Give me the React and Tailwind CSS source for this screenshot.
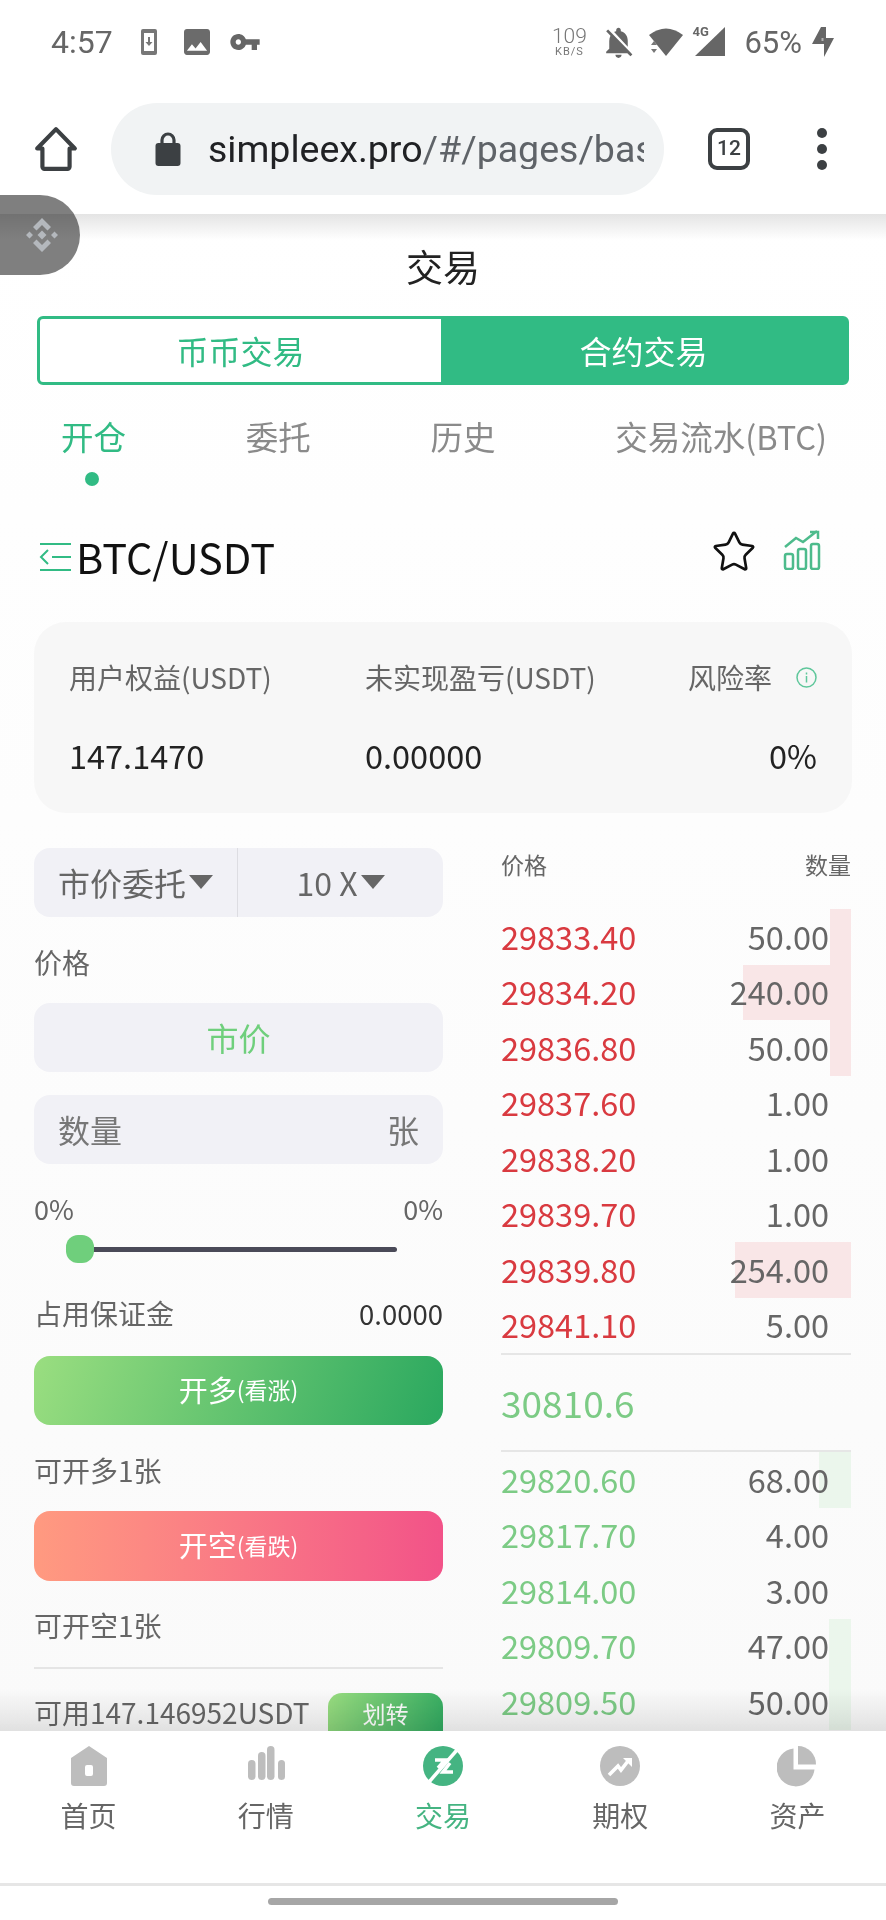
import React from "react";
import { Star } from "lucide-react";

const asks = [
  { price: "29833.40", qty: "50.00", bar: "w-[21px]" },
  { price: "29834.20", qty: "240.00", bar: "w-[108px]" },
  { price: "29836.80", qty: "50.00", bar: "w-[21px]" },
  { price: "29837.60", qty: "1.00" },
  { price: "29838.20", qty: "1.00" },
  { price: "29839.70", qty: "1.00" },
  { price: "29839.80", qty: "254.00", bar: "w-[116px]" },
  { price: "29841.10", qty: "5.00" },
];

const bids = [
  { price: "29820.60", qty: "68.00", bar: "w-[32px]" },
  { price: "29817.70", qty: "4.00" },
  { price: "29814.00", qty: "3.00" },
  { price: "29809.70", qty: "47.00", bar: "w-[22px]" },
  { price: "29809.50", qty: "50.00", bar: "w-[22px]" },
];

const HomeIcon = () => (
  <svg width="40" height="42" viewBox="0 0 40 42">
    <path fillRule="evenodd" d="M20 1 38 13v25a3 3 0 0 1-3 3H5a3 3 0 0 1-3-3V13ZM18 20a2 2 0 0 0-2 2v7a2 2 0 0 0 2 2h4a2 2 0 0 0 2-2v-7a2 2 0 0 0-2-2Z" fill="#bdbdbd" />
  </svg>
);

const BarsIcon = () => (
  <svg width="40" height="42" viewBox="0 0 40 42">
    <rect x="2" y="15" width="7.5" height="20" rx="3.7" fill="#bdbdbd" />
    <rect x="12" y="7" width="7.5" height="28" rx="3.7" fill="#bdbdbd" />
    <rect x="21" y="1" width="7.5" height="34" rx="3.7" fill="#bdbdbd" />
    <rect x="32" y="15" width="7" height="20" rx="3.5" fill="#bdbdbd" />
  </svg>
);

const TradeIcon = () => (
  <svg width="40" height="42" viewBox="0 0 40 42">
    <circle cx="20" cy="21" r="20" fill="#45b482" />
    <path d="M6 37 34 5" stroke="#fff" strokeWidth="3.5" />
    <path d="M12 15h10l-7 8M30 27H20l7-9" stroke="#fff" strokeWidth="3.5" fill="none" />
  </svg>
);

const OptionIcon = () => (
  <svg width="40" height="42" viewBox="0 0 40 42">
    <circle cx="20" cy="21" r="20" fill="#bdbdbd" />
    <path d="M9 30 18 21l3 4 7-9" stroke="#fff" strokeWidth="3.6" fill="none" />
    <path d="M23 13h9v9Z" fill="#fff" />
  </svg>
);

const PieIcon = () => (
  <svg width="40" height="42" viewBox="0 0 40 42">
    <path d="M16.500 3.500v21h21A19 19 0 1 1 16.500 3.500Z" fill="#bdbdbd" />
    <path d="M21 1a18 18 0 0 1 18 18.500H21Z" fill="#bdbdbd" />
  </svg>
);

const navItems = [
  { label: "首页", icon: HomeIcon },
  { label: "行情", icon: BarsIcon },
  { label: "交易", icon: TradeIcon, active: true },
  { label: "期权", icon: OptionIcon },
  { label: "资产", icon: PieIcon },
];

const StatusBar = () => (
  <div className="h-[84px] flex items-center font-['Roboto',sans-serif] text-[#666]">
    <span className="ml-[51px] text-[32px] leading-none">4:57</span>
    <svg className="ml-[28px]" width="16" height="26" viewBox="0 0 16 26">
      <path fillRule="evenodd" d="M2 0h12a2 2 0 0 1 2 2v22a2 2 0 0 1-2 2H2a2 2 0 0 1-2-2V2a2 2 0 0 1 2-2Zm1 4v18h10V4Z" fill="#777" />
      <path d="M7 8h2v5h2.500L8 17l-3.500-4H7Z" fill="#777" />
    </svg>
    <svg className="ml-[27px]" width="26" height="26" viewBox="3 3 18 18">
      <path d="M21 19V5c0-1.100-.9-2-2-2H5c-1.100 0-2 .9-2 2v14c0 1.100.9 2 2 2h14c1.100 0 2-.9 2-2zM8.500 13.500l2.500 3.010L14.500 12l4.500 6H5l3.500-4.500z" fill="#6b6b6b" />
    </svg>
    <svg className="ml-[19px]" width="32" height="32" viewBox="0 0 24 24">
      <path d="M12.650 10C11.830 7.670 9.610 6 7 6c-3.310 0-6 2.690-6 6s2.690 6 6 6c2.610 0 4.830-1.670 5.650-4H17v4h4v-4h2v-4H12.650zM7 14c-1.100 0-2-.9-2-2s.9-2 2-2 2 .9 2 2-.9 2-2 2z" fill="#666" />
    </svg>
    <div className="ml-auto w-[32px] flex flex-col items-center text-[#777]">
      <span className="text-[21px] leading-[20px] font-light">109</span>
      <span className="text-[11px] leading-[12px] tracking-[1px]">KB/S</span>
    </div>
    <svg className="ml-[15px]" width="37" height="37" viewBox="0 0 24 24">
      <path d="M20 18.690L7.840 6.140 5.270 3.490 4 4.760l2.800 2.800v.01c-.52.99-.8 2.160-.8 3.420v5l-2 2v1h13.730l2 2L21 19.720l-1-1.030zM12 22c1.110 0 2-.89 2-2h-4c0 1.110.89 2 2 2zm6-7.320V11c0-3.080-1.640-5.640-4.500-6.320V4c0-.83-.67-1.500-1.500-1.500s-1.500.67-1.500 1.500v.68c-.15.03-.29.08-.42.12-.1.03-.2.07-.3.11h-.01c-.2.08-.4.17-.59.27-.01 0-.01 0-.02.01L18 14.680z" fill="#666" />
    </svg>
    <svg className="ml-[9px]" width="38" height="32" viewBox="0 0 38 32">
      <path d="M3 9Q20-4 37 9L20 30Z" fill="#666" />
      <path d="M5 19l3-4 3 4ZM5 23l3 4 3-4Z" fill="#777" />
    </svg>
    <div className="relative ml-[10px] w-[32px] h-[32px]">
      <svg className="absolute left-0 top-0" width="32" height="32" viewBox="0 0 32 32">
        <path d="M1 30 31 1v29Z" fill="#666" />
      </svg>
      <span className="absolute left-[-2px] top-[-1px] text-[13px] leading-[14px] font-bold text-[#666]">4G</span>
    </div>
    <span className="ml-[18px] text-[31px] leading-none">65%</span>
    <svg className="ml-[9px] mr-[51px]" width="24" height="32" viewBox="0 0 24 32">
      <path d="M10 1h5v11h8L13 31V18H1Z" fill="#666" />
      <path d="M10.500 12h2v3h-2Z" fill="#fff" opacity="0.5" />
    </svg>
  </div>
);

const Toolbar = () => (
  <div className="h-[130px] flex items-center relative z-10 bg-white font-['Roboto',sans-serif]">
    <svg className="ml-[34px]" width="44" height="46" viewBox="0 0 42 44">
      <path d="M21 3 39 21.500h-5V39a2 2 0 0 1-2 2H10a2 2 0 0 1-2-2V21.500H3Z" fill="none" stroke="#3c4043" strokeWidth="4" strokeLinejoin="round" />
    </svg>
    <div className="ml-[33px] w-[553px] h-[92px] rounded-full bg-[#f1f3f4] flex items-center overflow-hidden pl-[44px] pr-[20px]">
      <svg className="shrink-0" width="26" height="34" viewBox="0 0 26 34">
        <path d="M7 12V8a6 6 0 0 1 12 0v4" fill="none" stroke="#3c4043" strokeWidth="3.200" />
        <rect x="0.500" y="11" width="25" height="23" rx="3" fill="#3c4043" />
      </svg>
      <div className="ml-[27px] pt-[2px] overflow-hidden whitespace-nowrap text-[37.500px] leading-none">
        <span className="text-[#202124]">simpleex.pro</span>
        <span className="text-[#5f6368]">/#/pages/bas</span>
      </div>
    </div>
    <div className="ml-[44px] w-[42px] h-[42px] rounded-[9px] border-[4px] border-[#3c4043] flex items-center justify-center text-[21px] font-medium text-[#3c4043]">
      12
    </div>
    <div className="ml-[67px] flex flex-col gap-[6px]">
      <span className="w-[10px] h-[10px] rounded-full bg-[#3c4043]" />
      <span className="w-[10px] h-[10px] rounded-full bg-[#3c4043]" />
      <span className="w-[10px] h-[10px] rounded-full bg-[#3c4043]" />
    </div>
  </div>
);

const OrderRow = ({ price, qty, bar, barColor, priceColor }) => (
  <div className="relative h-[55.500px] pb-[2px] flex items-center justify-between">
    {bar && <div className={`absolute right-0 top-0 h-full ${bar} ${barColor}`} />}
    <span className={`relative text-[32.500px] leading-none ${priceColor}`}>{price}</span>
    <span className="relative pr-[22px] text-[32.500px] leading-none text-[#666]">{qty}</span>
  </div>
);

const Box = ({ children, className = "" }) => (
  <div className={`h-[69px] rounded-[16px] bg-[#f1f1f6] flex items-center pb-[2px] ${className}`}>{children}</div>
);

const Caret = () => <span className="ml-[3px] w-0 h-0 border-x-[12px] border-x-transparent border-t-[14px] border-t-[#666]" />;

const OrderForm = () => (
  <div className="w-[409px] text-[28px] text-[#666]">
    <Box>
      <div className="w-[204px] h-[69px] -mb-[2px] pb-[2px] flex items-center justify-center border-r border-[#dddde2] text-[32px]">
        市价委托
        <Caret />
      </div>
      <div className="flex-1 flex items-center justify-center text-[32px]">
        10 X
        <Caret />
      </div>
    </Box>
    <div className="mt-[26px] h-[38px] leading-[38px]">价格</div>
    <Box className="mt-[22px] justify-center text-[32px] text-[#6fcf7c]">市价</Box>
    <Box className="mt-[23px] justify-between px-[24px] text-[32px] text-[#777]">
      <span>数量</span>
      <span>张</span>
    </Box>
    <div className="mt-[26px] h-[38px] flex justify-between text-[27px] leading-[38px]">
      <span>0%</span>
      <span>0%</span>
    </div>
    <div className="relative mt-[7px] h-[28px] ml-[32px] mr-[46px] flex items-center">
      <div className="w-full h-[5px] rounded-full bg-[#4a4a58]" />
      <div className="absolute left-0 top-0 w-[28px] h-[28px] rounded-[12px] bg-[#6fcf7c]" />
    </div>
    <div className="mt-[30px] h-[40px] flex items-center justify-between leading-[40px]">
      <span>占用保证金</span>
      <span className="text-[27.500px] text-[#333]">0.0000</span>
    </div>
    <div className="mt-[23px] h-[69px] pb-[2px] rounded-[16px] bg-linear-[110deg,#9ade80,#2aa85f] flex items-center justify-center text-[29px] text-white">
      开多<span className="text-[23px]">(看涨)</span>
    </div>
    <div className="mt-[25px] h-[40px] leading-[40px]">可开多1张</div>
    <div className="mt-[21px] h-[70px] pb-[2px] rounded-[16px] bg-linear-to-r from-[#ff9a80] to-[#f25288] flex items-center justify-center text-[29px] text-white">
      开空<span className="text-[23px]">(看跌)</span>
    </div>
    <div className="mt-[24px] h-[40px] leading-[40px]">可开空1张</div>
    <div className="mt-[22px] h-[2px] bg-[#e5e5e5]" />
    <div className="mt-[24px] flex justify-between">
      <span className="h-[38px] leading-[38px]">可用147.146952USDT</span>
      <div className="w-[115px] h-[60px] rounded-[14px] bg-linear-[110deg,#9ade80,#2aa85f] text-center text-white text-[23px] leading-[40px]">
        划转
      </div>
    </div>
  </div>
);

const OrderBook = () => (
  <div className="w-[350px]">
    <div className="h-[34px] mb-[27px] flex justify-between text-[23px] leading-[32px] text-[#666]">
      <span>价格</span>
      <span>数量</span>
    </div>
    {asks.map((row) => (
      <OrderRow key={row.price} {...row} barColor="bg-[#f9e6e7]" priceColor="text-[#d93a40]" />
    ))}
    <div className="h-[99px] border-y-2 border-[#e6e6e6] flex items-center text-[37px] leading-none text-[#7ccb85]">
      30810.6
    </div>
    {bids.map((row) => (
      <OrderRow key={row.price} {...row} barColor="bg-[#ebf6ec]" priceColor="text-[#7ccb85]" />
    ))}
  </div>
);

export default function App() {
  return (
    <div className="relative w-[886px] h-[1920px] overflow-hidden flex flex-col bg-white font-['Noto_Sans_CJK_SC','Noto_Sans',sans-serif]">
      <div className="shrink-0 bg-white">
        <StatusBar />
        <Toolbar />
      </div>

      <main className="relative flex-1 min-h-0 overflow-hidden bg-linear-to-b from-white to-[#fafafa]">
        <div className="absolute inset-x-0 top-0 h-[26px] bg-linear-to-b from-[#e4e4e4] to-transparent" />
        <h1 className="relative h-[102px] flex items-center justify-center text-[37px] font-normal text-[#222] pt-[3px]">交易</h1>

        <div className="mx-[37px] h-[69px] pb-[2px] flex rounded-[6px] overflow-hidden border-[3px] border-[#31bb84] bg-[#31bb84] text-[32px]">
          <div className="w-[401px] -mb-[2px] pb-[2px] flex items-center justify-center bg-white text-[#31bb84]">币币交易</div>
          <div className="flex-1 flex items-center justify-center text-white">合约交易</div>
        </div>

        <div className="mt-[29px] ml-[61px] mr-[59px] flex justify-between text-[32.500px] leading-[44px] text-[#8a8a8a]">
          <div className="relative text-[#31bb84]">
            开仓
            <span className="absolute left-[24px] top-[58px] w-[14px] h-[14px] rounded-full bg-[#31bb84]" />
          </div>
          <div>委托</div>
          <div>历史</div>
          <div>交易流水(BTC)</div>
        </div>

        <div className="mt-[67px] pl-[39px] pr-[65px] h-[64px] flex items-center">
          <svg width="33" height="30" viewBox="0 0 33 30" fill="none" stroke="#31bb84" strokeWidth="2">
            <path d="M1 2h31M13 15h19M1 28h31M9 8l-7 7 7 7" />
          </svg>
          <span className="ml-[4px] text-[41.500px] leading-none text-[#111]">BTC/USDT</span>
          <Star className="ml-auto -mt-[10px]" size={46} strokeWidth={1.400} color="#111" />
          <svg className="ml-[26px] -mt-[14px]" width="38" height="40" viewBox="0 0 38 40" fill="none" stroke="#4dbb8c" strokeWidth="2.500">
            <rect x="2" y="24" width="8" height="15" rx="2" />
            <rect x="15" y="19" width="8" height="20" rx="2" />
            <rect x="28" y="14" width="8" height="25" rx="2" />
            <path d="M2 17 13 8l7 4 14-11M27 2h8v7" />
          </svg>
        </div>

        <div className="mt-[33px] mx-[34px] h-[191px] rounded-[32px] bg-[#f7f7f7] px-[35px] pt-[35px]">
          <div className="flex text-[28px] leading-[40px] text-[#666]">
            <span className="w-[296px]">用户权益(USDT)</span>
            <span>未实现盈亏(USDT)</span>
            <span className="ml-auto flex items-center gap-[24px]">
              风险率
              <svg width="21" height="21" viewBox="0 0 21 21" fill="none" stroke="#5fc79b" strokeWidth="1.500">
                <circle cx="10.500" cy="10.500" r="9.500" />
                <path d="M10.500 9v6.500M10.500 5.500v2" />
              </svg>
            </span>
          </div>
          <div className="mt-[39px] flex text-[32.500px] leading-[38px] text-[#222]">
            <span className="w-[296px]">147.1470</span>
            <span>0.00000</span>
            <span className="ml-auto">0%</span>
          </div>
        </div>

        <div className="mt-[35px] pl-[34px] pr-[35px] flex justify-between">
          <OrderForm />
          <OrderBook />
        </div>

        <div className="absolute inset-x-0 bottom-0 h-[42px] bg-linear-to-b from-transparent to-[#e6e6e6] mix-blend-multiply" />
      </main>

      <nav className="shrink-0 h-[152px] grid grid-cols-5 bg-white pt-[14px]">
        {navItems.map((item) => (
          <div key={item.label} className="flex flex-col items-center">
            <item.icon />
            <span className={`mt-[8px] text-[28px] leading-[40px] ${item.active ? "text-[#45b482]" : "text-[#666]"}`}>{item.label}</span>
          </div>
        ))}
      </nav>
      <div className="shrink-0 h-[37px] border-t-[3px] border-[#e6e6e6] bg-white pt-[12px]">
        <div className="mx-auto w-[350px] h-[7px] rounded-full bg-[#a6a6a6]" />
      </div>

      <div className="absolute z-20 left-0 top-[195px] w-[80px] h-[80px] rounded-r-[40px] bg-black/50 flex items-center justify-center">
        <svg width="32" height="34" viewBox="0 0 32 34" fill="#b4b8bd" className="ml-[3px]">
          <path d="M16 12.500l4.500 4.500-4.500 4.500-4.500-4.500Z" />
          <path d="M3.500 13.500l3.500 3.500-3.500 3.500L0 17ZM28.500 13.500l3.500 3.500-3.500 3.500-3.500-3.500Z" />
          <path d="M16 0l9 9-3.500 3.500L16 7l-5.500 5.500L7 9Z" />
          <path d="M16 34l-9-9 3.500-3.500L16 27l5.500-5.500L25 25Z" />
        </svg>
      </div>
    </div>
  );
}
